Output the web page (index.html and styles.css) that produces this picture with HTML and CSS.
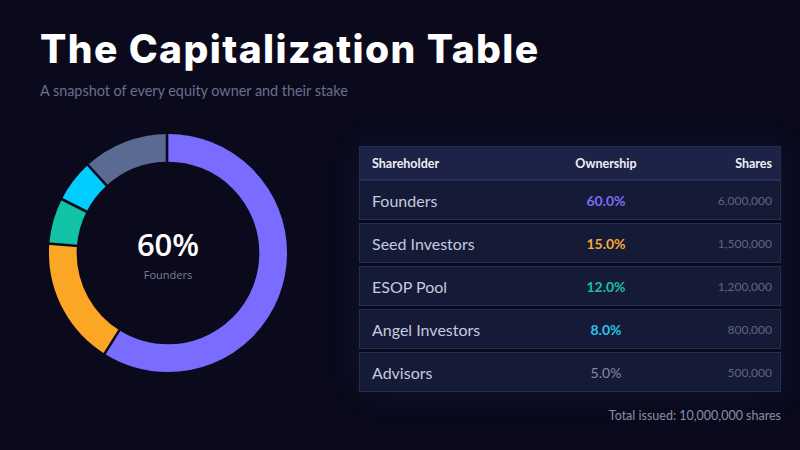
FILE: index.html
```html
<!DOCTYPE html>
<html lang="en">
<head>
<meta charset="utf-8">
<title>The Capitalization Table</title>
<link rel="stylesheet" href="styles.css">
</head>
<body>
<div class="page">
  <header class="head">
    <h1 class="title">The Capitalization Table</h1>
    <p class="subtitle">A snapshot of every equity owner and their stake</p>
  </header>
  <main class="main">
    <div class="chart">
      <svg class="donut" viewBox="0 0 240 240" width="240" height="240">
        <g transform="rotate(-90 120 120)" fill="none" stroke-width="27.7">
          <circle cx="120" cy="120" r="105.2" pathLength="360" stroke="#7a6cff" stroke-dasharray="212.2 147.8" stroke-dashoffset="0"/>
          <circle cx="120" cy="120" r="105.2" pathLength="360" stroke="#fba625" stroke-dasharray="62.3 297.7" stroke-dashoffset="-212.2"/>
          <circle cx="120" cy="120" r="105.2" pathLength="360" stroke="#12c2a5" stroke-dasharray="22.4 337.6" stroke-dashoffset="-274.5"/>
          <circle cx="120" cy="120" r="105.2" pathLength="360" stroke="#00cdfd" stroke-dasharray="20.8 339.2" stroke-dashoffset="-296.9"/>
          <circle cx="120" cy="120" r="105.2" pathLength="360" stroke="#5b6a93" stroke-dasharray="42.3 317.7" stroke-dashoffset="-317.7"/>
        </g>
        <g stroke="#0a0a1c" stroke-width="2.6">
          <line x1="119" y1="31" x2="119" y2="-2"/>
          <line x1="72.04" y1="196.16" x2="55.52" y2="222.39"/>
          <line x1="30.28" y1="112.94" x2="-0.63" y2="110.51"/>
          <line x1="39.74" y1="79.28" x2="12.09" y2="65.26"/>
          <line x1="59.43" y1="53.43" x2="38.57" y2="30.50"/>
        </g>
      </svg>
      <div class="center">
        <div class="center-value">60%</div>
        <div class="center-label">Founders</div>
      </div>
    </div>
    <section class="table-wrap">
      <div class="table">
        <div class="row row-head">
          <span class="c-name">Shareholder</span>
          <span class="c-own">Ownership</span>
          <span class="c-shares">Shares</span>
        </div>
        <div class="row">
          <span class="c-name">Founders</span>
          <span class="c-own pct purple">60.0%</span>
          <span class="c-shares">6,000,000</span>
        </div>
        <div class="row">
          <span class="c-name">Seed Investors</span>
          <span class="c-own pct orange">15.0%</span>
          <span class="c-shares">1,500,000</span>
        </div>
        <div class="row">
          <span class="c-name">ESOP Pool</span>
          <span class="c-own pct teal">12.0%</span>
          <span class="c-shares">1,200,000</span>
        </div>
        <div class="row">
          <span class="c-name">Angel Investors</span>
          <span class="c-own pct cyan">8.0%</span>
          <span class="c-shares">800,000</span>
        </div>
        <div class="row">
          <span class="c-name">Advisors</span>
          <span class="c-own pct muted">5.0%</span>
          <span class="c-shares">500,000</span>
        </div>
      </div>
      <p class="total">Total issued: 10,000,000 shares</p>
    </section>
  </main>
</div>
</body>
</html>
```
FILE: styles.css
```css
* { box-sizing: border-box; }
html, body {
  margin: 0;
  padding: 0;
  width: 800px;
  height: 450px;
  overflow: hidden;
  background: #0a0a1c;
}
.page {
  width: 800px;
  height: 450px;
  padding: 0 19px 0 40px;
  font-family: Lato, "Noto Sans", sans-serif;
}
.head {
  padding-top: 27px;
}
.title {
  margin: 0;
  font-family: Inter, "Noto Sans", sans-serif;
  font-weight: 800;
  font-size: 39px;
  line-height: 44px;
  color: #ffffff;
  letter-spacing: 1.4px;
}
.subtitle {
  margin: 11px 0 0;
  font-size: 14.4px;
  line-height: 18px;
  color: #6b6f8c;
}
.main {
  display: flex;
  align-items: flex-start;
  margin-top: 12px;
}
.chart {
  position: relative;
  width: 240px;
  height: 240px;
  margin: 21px 0 0 8px;
  flex: none;
}
.donut { display: block; overflow: visible; }
.center {
  position: absolute;
  left: 0;
  top: 0;
  width: 240px;
  height: 240px;
  display: flex;
  flex-direction: column;
  align-items: center;
  justify-content: center;
  padding-top: 2px;
}
.center-value {
  font-family: "Open Sans", "Noto Sans", sans-serif;
  font-weight: 600;
  font-size: 31px;
  line-height: 36px;
  color: #ffffff;
}
.center-label {
  font-family: "Open Sans", "Noto Sans", sans-serif;
  font-size: 11px;
  line-height: 14px;
  color: #7d8098;
  margin-top: 6px;
}
.table-wrap {
  margin-left: 71px;
  margin-top: 34px;
  width: 422px;
  flex: none;
}
.table {
  display: flex;
  flex-direction: column;
  gap: 3px;
  box-shadow: 0 0 28px rgba(35, 45, 95, 0.28);
}
.row {
  display: grid;
  grid-template-columns: 180px 108px 1fr;
  align-items: center;
  height: 40px;
  padding: 0 8px 0 12px;
  background: #151a37;
  border: 1px solid #272e50;
}
.row .c-name { font-size: 16px; color: #c6cadf; }
.row .c-shares { font-size: 12px; color: #5f6483; }
.row-head {
  height: 34px;
  background: #1c2346;
  border-color: #262d52;
  margin-bottom: -3px;
  border-bottom-color: #2b3358;
  font-weight: 700;
}
.row-head .c-name, .row-head .c-own, .row-head .c-shares {
  font-size: 12.5px;
  color: #eef0f8;
}
.c-name { text-align: left; }
.c-own { text-align: center; }
.c-shares { text-align: right; }
.pct { font-size: 14px; font-weight: 700; }
.purple { color: #7a6cf2; }
.orange { color: #f7a935; }
.teal { color: #1cbfa9; }
.cyan { color: #2ac3ef; }
.muted { color: #858aa4; font-weight: 400; }
.total {
  margin: 17px 0 0;
  text-align: right;
  font-size: 12.5px;
  line-height: 14px;
  color: #8a8ea6;
}
```
